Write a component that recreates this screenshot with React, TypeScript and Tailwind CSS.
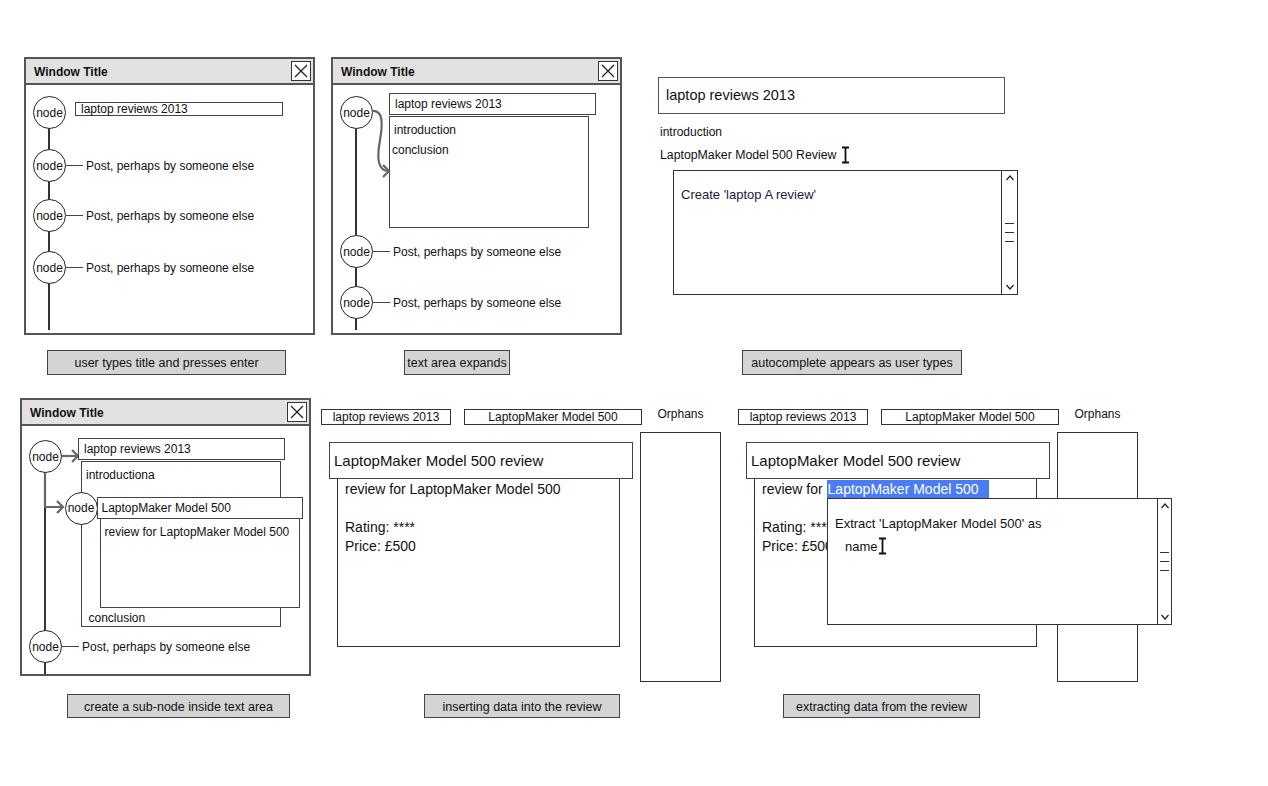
import React from "react";

const Node = ({ className = "" }: { className?: string }) => (
  <div
    className={`w-[33px] h-[33px] shrink-0 rounded-full border-[1.5px] border-[#222] bg-white flex items-center justify-center text-[12px] leading-none ${className}`}
  >
    node
  </div>
);

const PostRow = ({ className = "" }: { className?: string }) => (
  <div className={`relative flex items-center ${className}`}>
    <Node />
    <div className="w-[17px] h-[1.5px] bg-[#444]" />
    <span className="ml-[3px] text-[12px] leading-none whitespace-nowrap">Post, perhaps by someone else</span>
  </div>
);

const CloseBtn = () => (
  <div className="w-[20px] h-[20px] border-[1.5px] border-[#333] bg-white flex items-center justify-center">
    <svg width="14" height="14" viewBox="0 0 14 14">
      <path d="M1 1 L13 13 M13 1 L1 13" stroke="#222" strokeWidth="1.3" fill="none" />
    </svg>
  </div>
);

const Win = ({ className = "", bodyClass = "", children }: { className?: string; bodyClass?: string; children?: React.ReactNode }) => (
  <div className={`flex flex-col w-[291px] h-[278px] shrink-0 border-2 border-[#555] bg-white ${className}`}>
    <div className="h-[26px] shrink-0 flex items-center justify-between pl-[8px] pr-[2px] bg-[#e2e2e2] border-b-2 border-[#555]">
      <span className="pt-[2px] font-bold text-[12px] leading-none">Window Title</span>
      <CloseBtn />
    </div>
    <div className={`relative flex-1 flex flex-col pl-[7px] ${bodyClass}`}>{children}</div>
  </div>
);

const VLine = ({ className = "" }: { className?: string }) => (
  <div className={`absolute left-[22px] w-[1.5px] bg-[#333] ${className}`} />
);

const IBeam = ({ className = "" }: { className?: string }) => (
  <svg className={className} width="9" height="18" viewBox="0 0 9 18">
    <path d="M1 1.5 H8 M4.5 1.5 V16.5 M1 16.5 H8" stroke="#111" strokeWidth="1.8" fill="none" />
  </svg>
);

const Scrollbar = ({ className = "" }: { className?: string }) => (
  <div className={`flex flex-col items-center justify-between border-l-[1.5px] border-[#333] bg-white py-[3px] ${className}`}>
    <svg width="10" height="8" viewBox="0 0 10 8">
      <path d="M1.5 6 L5 2 L8.5 6" stroke="#222" strokeWidth="1.2" fill="none" />
    </svg>
    <div className="flex flex-col gap-[8px] w-[9px]">
      <div className="h-[1.2px] bg-[#333]" />
      <div className="h-[1.2px] bg-[#333]" />
      <div className="h-[1.2px] bg-[#333]" />
    </div>
    <svg width="10" height="8" viewBox="0 0 10 8">
      <path d="M1.5 2 L5 6 L8.5 2" stroke="#222" strokeWidth="1.2" fill="none" />
    </svg>
  </div>
);

const Caption = ({ className = "", children }: { className?: string; children: React.ReactNode }) => (
  <div
    className={`flex items-center justify-center pt-[2px] bg-[#d4d4d4] border-[1.5px] border-[#444] text-[12.5px] leading-none whitespace-nowrap ${className}`}
  >
    {children}
  </div>
);

const SmallBox = ({ className = "", children }: { className?: string; children: React.ReactNode }) => (
  <div
    className={`h-[16px] shrink-0 flex items-center justify-center border-[1.5px] border-[#333] bg-white text-[12px] leading-none whitespace-nowrap ${className}`}
  >
    {children}
  </div>
);

const Field = ({ className = "", children }: { className?: string; children: React.ReactNode }) => (
  <div className={`shrink-0 border-[1.5px] border-[#444] bg-white flex items-center text-[12px] leading-none whitespace-nowrap ${className}`}>
    {children}
  </div>
);

const ReviewScene = ({ extract = false }: { extract?: boolean }) => (
  <div className="relative flex items-start">
    <div className="w-[319px] flex flex-col">
      <div className="flex gap-[13px]">
        <SmallBox className="w-[130px]">laptop reviews 2013</SmallBox>
        <SmallBox className="w-[178px]">LaptopMaker Model 500</SmallBox>
      </div>
      <div className="ml-[8px] mt-[17px] w-[304px] h-[37px] border-[1.5px] border-[#444] bg-white flex items-center pl-[4px] text-[15px] leading-none z-10">
        LaptopMaker Model 500 review
      </div>
      <div className="ml-[16px] -mt-[1px] w-[283px] h-[169px] border-[1.5px] border-[#333] bg-white pl-[7px] pt-[1px] text-[14px] leading-[19px] flex flex-col">
        {extract ? (
          <span className="whitespace-nowrap">
            review for{" "}
            <span className="inline-block w-[162px] bg-[#4a7cf5] text-white pl-[1px]">LaptopMaker Model 500</span>
          </span>
        ) : (
          <span className="whitespace-nowrap">review for LaptopMaker Model 500</span>
        )}
        <span>&nbsp;</span>
        <span>Rating: ****</span>
        <span>Price: £500</span>
      </div>
    </div>
    <div className="w-[81px] flex flex-col items-center">
      <span className="-mt-[2px] text-[12px] leading-[14px]">Orphans</span>
      <div className="mt-[11px] w-[81px] h-[250px] border-[1.5px] border-[#333] bg-white" />
    </div>
    {extract && (
      <div className="absolute left-[89px] top-[89px] w-[345px] h-[127px] border-[1.5px] border-[#333] bg-white flex z-20">
        <div className="flex-1 flex flex-col pl-[7px] pt-[18px] text-[13px] leading-none">
          <span className="whitespace-nowrap">Extract 'LaptopMaker Model 500' as</span>
          <span className="flex items-center mt-[7px] ml-[10px]">
            <span>name</span>
            <IBeam />
          </span>
        </div>
        <Scrollbar className="w-[14px]" />
      </div>
    )}
  </div>
);

export default function App() {
  return (
    <div className="relative w-[1268px] h-[786px] bg-white overflow-hidden text-[#111] font-['Liberation_Sans',Arial,sans-serif]">
      <div className="flex flex-col pt-[57px]">
        {/* Row 1 */}
        <div className="flex items-start">
          {/* Scene 1 */}
          <div className="ml-[24px] flex flex-col">
            <Win bodyClass="pt-[11px]">
              <VLine className="top-[43px] h-[202px]" />
              <div className="relative flex items-start">
                <Node />
                <Field className="ml-[9px] mt-[6px] w-[208px] h-[14px] pl-[5px]">laptop reviews 2013</Field>
              </div>
              <PostRow className="mt-[20px]" />
              <PostRow className="mt-[17px]" />
              <PostRow className="mt-[19px]" />
            </Win>
            <Caption className="mt-[15px] ml-[23px] w-[239px] h-[25px]">user types title and presses enter</Caption>
          </div>

          {/* Scene 2 */}
          <div className="ml-[16px] flex flex-col">
            <Win bodyClass="pt-[8px]">
              <VLine className="top-[43px] h-[202px]" />
              <div className="relative flex items-start">
                <Node className="mt-[3px]" />
                <div className="ml-[16px] flex flex-col">
                  <Field className="w-[207px] h-[22px] pl-[5px]">laptop reviews 2013</Field>
                  <div className="mt-[1px] w-[200px] h-[112px] border-[1.5px] border-[#444] flex flex-col pt-[3px] pl-[4px] text-[12px] leading-[20px]">
                    <span>introduction</span>
                    <span className="-ml-[2px]">conclusion</span>
                  </div>
                </div>
              </div>
              <svg className="absolute left-0 top-0" width="120" height="120" viewBox="0 0 120 120">
                <path d="M39 26 C50 25 50 38 47 55 C44 72 44 86 56 86" stroke="#666" strokeWidth="2.2" fill="none" />
                <path d="M50 80 L56 86 L50 92" stroke="#666" strokeWidth="2.2" fill="none" />
              </svg>
              <PostRow className="mt-[7px]" />
              <PostRow className="mt-[18px]" />
            </Win>
            <Caption className="mt-[15px] ml-[73px] w-[106px] h-[25px]">text area expands</Caption>
          </div>

          {/* Scene 3 */}
          <div className="ml-[36px] pt-[20px] flex flex-col items-start">
            <div className="w-[347px] h-[37px] border-[1.5px] border-[#555] flex items-center pl-[7px] text-[14.5px] leading-none">
              laptop reviews 2013
            </div>
            <span className="mt-[11px] ml-[2px] text-[12px] leading-[14px]">introduction</span>
            <div className="mt-[7px] ml-[2px] flex items-center text-[12.3px] leading-none">
              <span>LaptopMaker Model 500 Review</span>
              <IBeam className="ml-[5px]" />
            </div>
            <div className="mt-[6px] ml-[15px] w-[345px] h-[125px] border-[1.5px] border-[#333] bg-white flex">
              <div className="flex-1 pl-[7px] pt-[17px] text-[13px] leading-none text-[#1a1a3a]">Create 'laptop A review'</div>
              <Scrollbar className="w-[16px]" />
            </div>
            <Caption className="mt-[55px] ml-[84px] w-[220px] h-[25px]">autocomplete appears as user types</Caption>
          </div>
        </div>

        {/* Row 2 */}
        <div className="mt-[23px] flex items-start">
          {/* Scene 4 */}
          <div className="ml-[20px] flex flex-col">
            <Win bodyClass="pt-[12px]">
              <VLine className="top-[46px] h-[202px]" />
              <svg className="absolute left-0 top-0" width="80" height="100" viewBox="0 0 80 100">
                <path d="M23 46 V81 H41" stroke="#666" strokeWidth="2.2" fill="none" />
                <path d="M35 75 L41 81 L35 87" stroke="#666" strokeWidth="2.2" fill="none" />
                <path d="M39 30 H56" stroke="#666" strokeWidth="2.2" fill="none" />
                <path d="M50 24 L56 30 L50 36" stroke="#666" strokeWidth="2.2" fill="none" />
              </svg>
              <div className="relative flex items-start">
                <Node className="mt-[2px]" />
                <div className="ml-[16px] flex flex-col">
                  <Field className="w-[207px] h-[22px] pl-[5px]">laptop reviews 2013</Field>
                  <div className="mt-[1px] ml-[3px] w-[200px] h-[166px] border-[1.5px] border-[#444] bg-white flex flex-col pl-[4px] pt-[6px] text-[12px] leading-[14px]">
                    <span>introductiona</span>
                    <div className="mt-[14.5px] -ml-[21.5px] flex items-start">
                      <Node className="-mt-[5px]" />
                      <div className="-ml-[1px] flex flex-col">
                        <Field className="w-[206px] h-[22px] pl-[4px]">LaptopMaker Model 500</Field>
                        <div className="-mt-[1px] ml-[3px] w-[200px] h-[90px] border-[1.5px] border-[#444] bg-white pl-[4px] pt-[7px] whitespace-nowrap leading-none">
                          review for LaptopMaker Model 500
                        </div>
                      </div>
                    </div>
                    <span className="mt-[3px] ml-[2.5px]">conclusion</span>
                  </div>
                </div>
              </div>
              <PostRow className="mt-[3px]" />
            </Win>
            <Caption className="mt-[18px] ml-[47px] w-[223px] h-[24px]">create a sub-node inside text area</Caption>
          </div>

          {/* Scene 5 */}
          <div className="ml-[10px] mt-[11px] flex flex-col">
            <ReviewScene />
            <Caption className="mt-[12px] ml-[103px] w-[196px] h-[24px]">inserting data into the review</Caption>
          </div>

          {/* Scene 6 */}
          <div className="ml-[17px] mt-[11px] flex flex-col">
            <ReviewScene extract />
            <Caption className="mt-[12px] ml-[45px] w-[197px] h-[24px]">extracting data from the review</Caption>
          </div>
        </div>
      </div>
    </div>
  );
}
